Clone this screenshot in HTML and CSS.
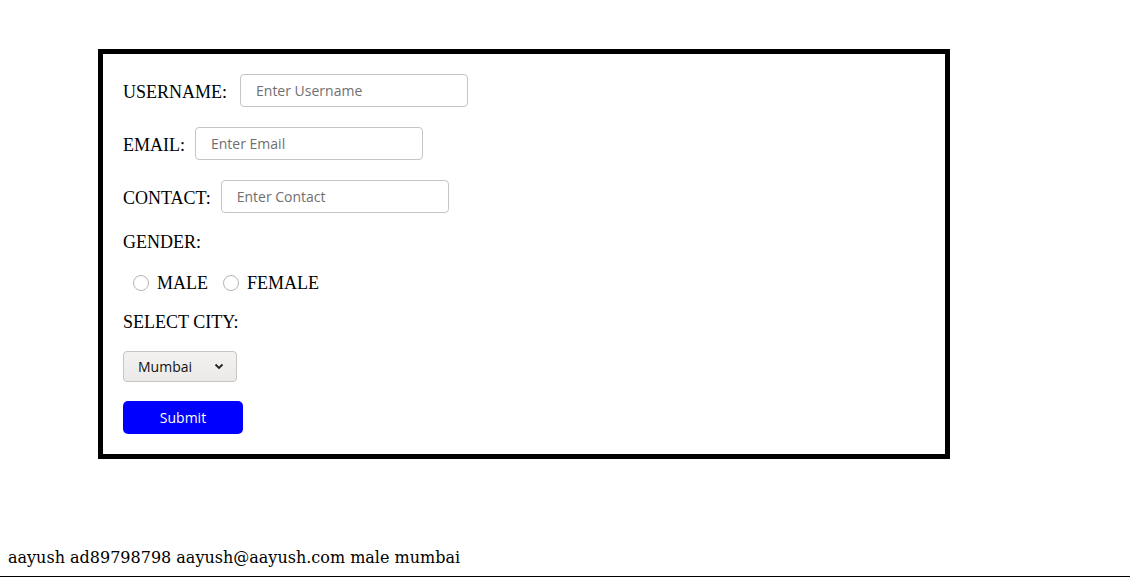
FILE: index.html
```html
<!DOCTYPE html>
<html>
<head>
<meta charset="utf-8">
<link rel="stylesheet" href="styles.css">
</head>
<body>
<div class="page">
  <form class="card">
    <div class="row">
      <label class="lbl wide">USERNAME:</label>
      <input class="field" type="text" placeholder="Enter Username">
    </div>
    <div class="row">
      <label class="lbl">EMAIL:</label>
      <input class="field" type="text" placeholder="Enter Email">
    </div>
    <div class="row">
      <label class="lbl">CONTACT:</label>
      <input class="field" type="text" placeholder="Enter Contact">
    </div>
    <div class="lbl gender">GENDER:</div>
    <div class="radios">
      <span class="radio"></span><span class="lbl">MALE</span>
      <span class="radio second"></span><span class="lbl">FEMALE</span>
    </div>
    <div class="lbl city">SELECT CITY:</div>
    <div class="select">
      <span>Mumbai</span>
      <svg width="10" height="7" viewBox="0 0 10 7"><path d="M1.5 1.5 L5 5 L8.5 1.5" fill="none" stroke="#222" stroke-width="1.8"/></svg>
    </div>
    <button class="submit" type="button">Submit</button>
  </form>
</div>
<p class="output">aayush ad89798798 aayush@aayush.com male mumbai</p>
</body>
</html>
```
FILE: styles.css
```css
html, body {
  margin: 0;
  padding: 0;
}
body {
  font-family: "DejaVu Serif", serif;
  color: #000;
  background: #fff;
  height: 577px;
  border-bottom: 1px solid #000;
  box-sizing: border-box;
  position: relative;
}
.page {
  padding: 49px 0 0 98px;
}
.card {
  width: 852px;
  box-sizing: border-box;
  border: 5px solid #000;
  padding: 20px 20px 20px 20px;
  display: flex;
  flex-direction: column;
  align-items: flex-start;
}
.lbl {
  font-family: "Liberation Serif", serif;
  font-size: 18px;
  line-height: 20px;
}
.row {
  display: flex;
  align-items: center;
  gap: 10px;
  height: 33px;
  margin-bottom: 20px;
}
.row .lbl {
  position: relative;
  top: 1px;
}
.row .lbl.wide {
  margin-right: 3px;
}
.field {
  width: 228px;
  height: 33px;
  box-sizing: border-box;
  border: 1px solid #c8c4c0;
  border-radius: 4px;
  padding: 0 15px;
  font-family: "Open Sans", sans-serif;
  font-size: 14px;
  outline: none;
}
.field::placeholder {
  color: #707070;
}
.gender {
  margin-top: -1px;
}
.radios {
  display: flex;
  align-items: center;
  margin-top: 21px;
  padding-left: 10px;
}
.radio {
  width: 14px;
  height: 14px;
  border: 1px solid #b8b4b0;
  border-radius: 50%;
  margin-right: 8px;
}
.radio.second {
  margin-left: 15px;
}
.city {
  margin-top: 19px;
}
.select {
  margin-top: 19px;
  width: 114px;
  height: 31px;
  box-sizing: border-box;
  border: 1px solid #c8c4c0;
  border-radius: 4px;
  background: linear-gradient(#f3f2f1, #ebeae9);
  display: flex;
  align-items: center;
  justify-content: space-between;
  padding: 0 12px 0 14px;
  font-family: "Open Sans", sans-serif;
  font-size: 14px;
  color: #111;
}
.submit {
  margin-top: 19px;
  width: 120px;
  height: 33px;
  border: none;
  border-radius: 5px;
  background: #0000ff;
  color: #fff;
  font-family: "Open Sans", sans-serif;
  font-size: 14px;
  cursor: pointer;
}
.output {
  position: absolute;
  left: 8px;
  top: 547px;
  margin: 0;
  font-size: 16px;
  line-height: 22px;
}
```
